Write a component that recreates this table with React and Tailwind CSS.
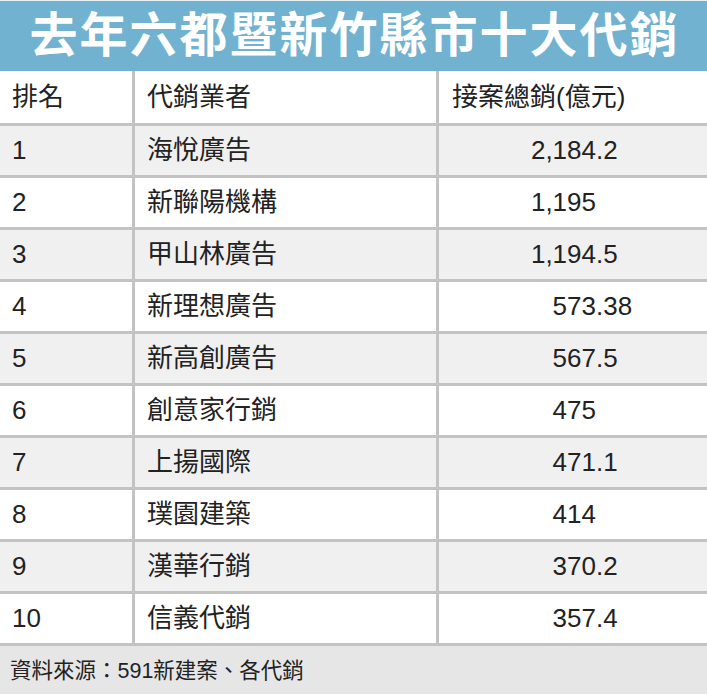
import React from "react";

const rows = [
  ["1", "海悅廣告", "2,184", ".2"],
  ["2", "新聯陽機構", "1,195", ""],
  ["3", "甲山林廣告", "1,194", ".5"],
  ["4", "新理想廣告", "573", ".38"],
  ["5", "新高創廣告", "567", ".5"],
  ["6", "創意家行銷", "475", ""],
  ["7", "上揚國際", "471", ".1"],
  ["8", "璞園建築", "414", ""],
  ["9", "漢華行銷", "370", ".2"],
  ["10", "信義代銷", "357", ".4"],
];

const font = { fontFamily: '"Liberation Sans", Arial, "Noto Sans CJK TC", sans-serif' };

const App = () => {
  return (
    <div className="w-[707px] h-[694px] bg-white text-[#222] overflow-hidden" style={font}>
      {/* Title */}
      <div className="h-[71px] bg-[#70b2d0] flex items-center justify-center border-t border-[#e8f2f7]">
        <h1 className="text-white font-bold text-[48px] leading-none tracking-[2px] pl-[2px] whitespace-nowrap">
          去年六都暨新竹縣市十大代銷
        </h1>
      </div>

      {/* Header */}
      <div className="grid grid-cols-[135px_304px_1fr] h-[55px] border-b-[3px] border-[#c3c3c3] text-[26px]">
        <div className="flex items-center pl-3 border-r-[3px] border-[#c3c3c3]">排名</div>
        <div className="flex items-center pl-3 border-r-[3px] border-[#c3c3c3]">代銷業者</div>
        <div className="flex items-center pl-[13px]">接案總銷(億元)</div>
      </div>

      {/* Rows */}
      {rows.map(([rank, name, whole, frac], i) => (
        <div
          key={rank}
          className={`grid grid-cols-[135px_304px_1fr] h-[52px] border-b-[3px] border-[#c3c3c3] text-[26px] ${
            i % 2 === 0 ? "bg-[#f0f0f0]" : "bg-white"
          }`}
        >
          <div className="flex items-center pl-3 border-r-[3px] border-[#c3c3c3]">{rank}</div>
          <div className="flex items-center pl-3 border-r-[3px] border-[#c3c3c3]">{name}</div>
          <div className="flex items-center">
            <span className="w-[157px] text-right">{whole}</span>
            <span>{frac}</span>
          </div>
        </div>
      ))}

      {/* Source */}
      <div className="h-[50px] bg-[#e6e6e6] flex items-center pl-[10px] text-[21.5px] text-[#222]">
        資料來源：591新建案、各代銷
      </div>
    </div>
  );
};

export default App;
